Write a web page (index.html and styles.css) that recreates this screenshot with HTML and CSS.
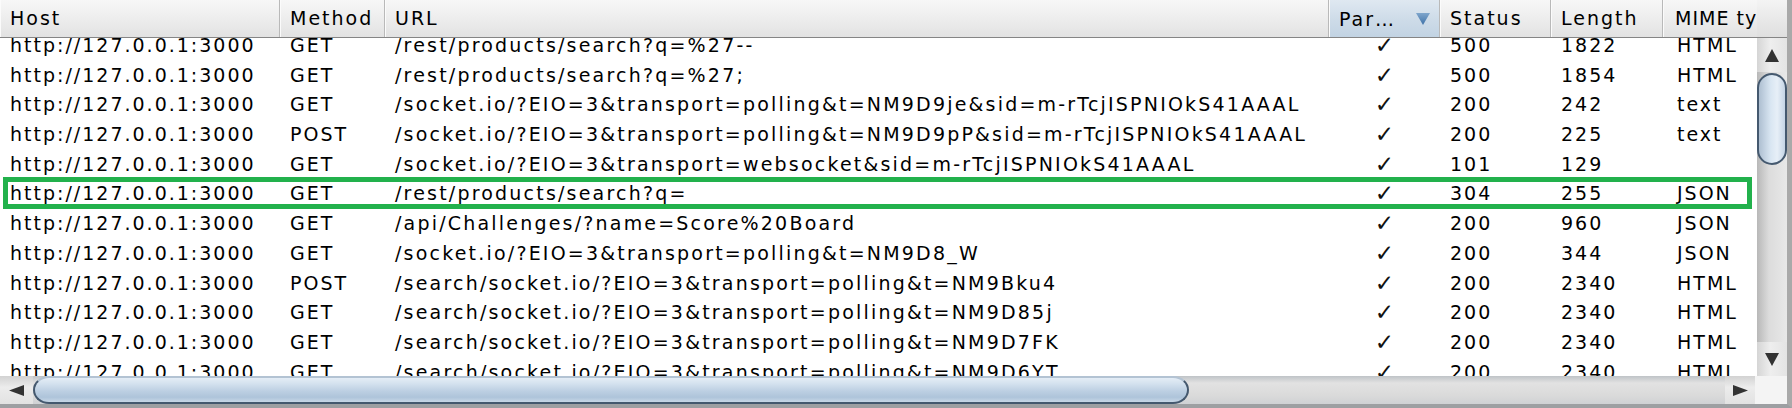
FILE: index.html
```html
<!DOCTYPE html>
<html>
<head>
<meta charset="utf-8">
<title>History</title>
<link rel="stylesheet" href="styles.css">
</head>
<body>
<div class="frame">
  <div class="header">
    <div class="hcell">Host</div>
    <div class="hcell">Method</div>
    <div class="hcell">URL</div>
    <div class="hcell sorted"><span>Par…</span><svg class="sortarrow" width="14" height="13" viewBox="0 0 14 13"><defs><linearGradient id="ga" x1="0" y1="0" x2="0" y2="1"><stop offset="0" stop-color="#7fa6cc"/><stop offset="1" stop-color="#3f72a8"/></linearGradient></defs><polygon points="0,1 14,1 7,13" fill="url(#ga)"/></svg></div>
    <div class="hcell">Status</div>
    <div class="hcell">Length</div>
    <div class="hcell mimeh">MIME ty</div>
    <div class="hcorner"></div>
  </div>
  <div class="body">
    <div class="viewport">
      <div class="rows">
        <div class="row"><span>http://127.0.0.1:3000</span><span>GET</span><span class="url">/rest/products/search?q=%27--</span><span class="chk">✓</span><span>500</span><span>1822</span><span class="mime">HTML</span></div>
        <div class="row"><span>http://127.0.0.1:3000</span><span>GET</span><span class="url">/rest/products/search?q=%27;</span><span class="chk">✓</span><span>500</span><span>1854</span><span class="mime">HTML</span></div>
        <div class="row"><span>http://127.0.0.1:3000</span><span>GET</span><span class="url">/socket.io/?EIO=3&amp;transport=polling&amp;t=NM9D9je&amp;sid=m-rTcjISPNIOkS41AAAL</span><span class="chk">✓</span><span>200</span><span>242</span><span class="mime">text</span></div>
        <div class="row"><span>http://127.0.0.1:3000</span><span>POST</span><span class="url">/socket.io/?EIO=3&amp;transport=polling&amp;t=NM9D9pP&amp;sid=m-rTcjISPNIOkS41AAAL</span><span class="chk">✓</span><span>200</span><span>225</span><span class="mime">text</span></div>
        <div class="row"><span>http://127.0.0.1:3000</span><span>GET</span><span class="url">/socket.io/?EIO=3&amp;transport=websocket&amp;sid=m-rTcjISPNIOkS41AAAL</span><span class="chk">✓</span><span>101</span><span>129</span><span class="mime"></span></div>
        <div class="row"><span>http://127.0.0.1:3000</span><span>GET</span><span class="url">/rest/products/search?q=</span><span class="chk">✓</span><span>304</span><span>255</span><span class="mime">JSON</span></div>
        <div class="row"><span>http://127.0.0.1:3000</span><span>GET</span><span class="url">/api/Challenges/?name=Score%20Board</span><span class="chk">✓</span><span>200</span><span>960</span><span class="mime">JSON</span></div>
        <div class="row"><span>http://127.0.0.1:3000</span><span>GET</span><span class="url">/socket.io/?EIO=3&amp;transport=polling&amp;t=NM9D8_W</span><span class="chk">✓</span><span>200</span><span>344</span><span class="mime">JSON</span></div>
        <div class="row"><span>http://127.0.0.1:3000</span><span>POST</span><span class="url">/search/socket.io/?EIO=3&amp;transport=polling&amp;t=NM9Bku4</span><span class="chk">✓</span><span>200</span><span>2340</span><span class="mime">HTML</span></div>
        <div class="row"><span>http://127.0.0.1:3000</span><span>GET</span><span class="url">/search/socket.io/?EIO=3&amp;transport=polling&amp;t=NM9D85j</span><span class="chk">✓</span><span>200</span><span>2340</span><span class="mime">HTML</span></div>
        <div class="row"><span>http://127.0.0.1:3000</span><span>GET</span><span class="url">/search/socket.io/?EIO=3&amp;transport=polling&amp;t=NM9D7FK</span><span class="chk">✓</span><span>200</span><span>2340</span><span class="mime">HTML</span></div>
        <div class="row"><span>http://127.0.0.1:3000</span><span>GET</span><span class="url">/search/socket.io/?EIO=3&amp;transport=polling&amp;t=NM9D6YT</span><span class="chk">✓</span><span>200</span><span>2340</span><span class="mime">HTML</span></div>
      </div>
      <div class="highlight"></div>
    </div>
    <div class="vscroll">
      <div class="vbtn"><svg width="14" height="13" viewBox="0 0 14 13"><polygon points="7,0 14,13 0,13" fill="#333"/></svg></div>
      <div class="vtrack"><div class="vthumb"></div></div>
      <div class="vbtn"><svg width="14" height="13" viewBox="0 0 14 13"><polygon points="0,0 14,0 7,13" fill="#333"/></svg></div>
    </div>
  </div>
  <div class="hscroll">
    <div class="hbtn"><svg width="15" height="11" viewBox="0 0 15 11"><polygon points="0,5.5 15,0 15,11" fill="#333"/></svg></div>
    <div class="htrack"><div class="hthumb"></div></div>
    <div class="hbtn right"><svg width="15" height="11" viewBox="0 0 15 11"><polygon points="15,5.5 0,0 0,11" fill="#333"/></svg></div>
    <div class="corner"></div>
  </div>
</div>
</body>
</html>
```

FILE: styles.css
```css
html, body {
  margin: 0;
  padding: 0;
  background: #ffffff;
}

.frame {
  width: 1792px;
  height: 408px;
  box-sizing: border-box;
  border-right: 5px solid #a9a9a9;
  border-bottom: 4px solid #9d9fa2;
  display: flex;
  flex-direction: column;
  overflow: hidden;
  font-family: "DejaVu Sans", sans-serif;
  font-size: 19px;
  letter-spacing: 2px;
  color: #000;
}

.header {
  height: 38px;
  flex: none;
  box-sizing: border-box;
  border-bottom: 1px solid #858585;
  display: grid;
  grid-template-columns: 280px 105px 944px 111px 111px 112px 94px 1fr;
  background: linear-gradient(#f7f7f7, #ececec 55%, #e2e2e2);
}

.hcell {
  box-sizing: border-box;
  padding-left: 10px;
  line-height: 36px;
  white-space: nowrap;
  overflow: hidden;
  border-right: 1px solid #b9b9b9;
  box-shadow: inset 1px 0 0 #fbfbfb;
}

.hcell.mimeh {
  border-right: none;
  padding-left: 12px;
  letter-spacing: 1px;
}

.hcell.sorted {
  display: flex;
  align-items: center;
  justify-content: space-between;
  padding-right: 9px;
  background: linear-gradient(#dfe8f1, #cddbe8 55%, #c2d3e3);
}

.sortarrow {
  flex: none;
}

.hcorner {
  background: linear-gradient(#f4f4f4, #e8e8e8 55%, #dfdfdf);
}

.body {
  flex: none;
  height: 338px;
  display: flex;
}

.viewport {
  width: 1757px;
  flex: none;
  position: relative;
  overflow: hidden;
  background: #fff;
}

.rows {
  margin-top: -7px;
}

.row {
  display: grid;
  grid-template-columns: 280px 105px 944px 111px 111px 112px 94px;
  height: 29.7px;
  line-height: 29.7px;
  white-space: nowrap;
}

.row > span {
  padding-left: 10px;
  overflow: hidden;
}

.row > .url {
  letter-spacing: 2.2px;
}

.row > .chk {
  padding-left: 0;
  text-align: center;
  letter-spacing: 0;
  font-size: 23px;
  color: #111;
}

.row > .mime {
  padding-left: 14px;
}

.highlight {
  position: absolute;
  left: 3px;
  top: 139px;
  width: 1749px;
  height: 32px;
  box-sizing: border-box;
  border: 5px solid #22b14c;
}

.vscroll {
  width: 30px;
  flex: none;
  display: flex;
  flex-direction: column;
  background: linear-gradient(to right, #c9c9c9, #e6e6e6 40%, #ececec);
}

.vbtn {
  height: 34px;
  flex: none;
  display: flex;
  align-items: center;
  justify-content: center;
  background: linear-gradient(to right, #d5d5d5, #eeeeee 45%, #e4e4e4);
}

.vtrack {
  flex: 1;
  position: relative;
  background: linear-gradient(to right, #b8b8b8, #dcdcdc 40%, #e8e8e8);
}

.vthumb {
  height: 92px;
  margin-top: 1px;
  box-sizing: border-box;
  border: 2px solid #45596f;
  border-radius: 15px;
  background: linear-gradient(to right, #aebfd1, #d9e6f2 45%, #e7eff7 70%, #c4d4e5);
}

.hscroll {
  height: 28px;
  flex: none;
  display: flex;
}

.hbtn {
  width: 33px;
  flex: none;
  display: flex;
  align-items: center;
  justify-content: center;
  background: linear-gradient(#d2d2d2, #ececec 40%, #e2e2e2);
}

.hbtn.right {
  width: 30px;
}

.htrack {
  flex: 1;
  display: flex;
  background: linear-gradient(#bfc3c7, #e2e2e2 25%, #dadada 70%, #cfd1d4);
}

.hthumb {
  width: 1156px;
  box-sizing: border-box;
  border: 2px solid #44586e;
  border-top-color: #b3c3d3;
  border-radius: 16px / 14px;
  background: linear-gradient(#e4edf6, #d3e1ee 25%, #bccfe2 55%, #aec4da 80%, #c7d7e6);
}

.corner {
  width: 32px;
  flex: none;
  background: #f4f4f4;
}
```
